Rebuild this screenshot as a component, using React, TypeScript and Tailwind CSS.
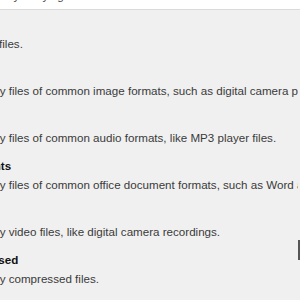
import React from 'react';

const TYPES = [
  { name: 'All Files', desc: 'Show all files.' },
  { name: 'Pictures', desc: 'Show only files of common image formats, such as digital camera photos.' },
  { name: 'Music', desc: 'Show only files of common audio formats, like MP3 player files.' },
  { name: 'Documents', desc: 'Show only files of common office document formats, such as Word and Excel files.' },
  { name: 'Video', desc: 'Show only video files, like digital camera recordings.' },
  { name: 'Compressed', desc: 'Show only compressed files.' },
  { name: 'Emails', desc: 'Show only emails from Thunderbird, Outlook Express and Windows Live Mail.' },
];

export default function App() {
  return (
    <div className="w-[300px] h-[300px] overflow-hidden bg-[#f0f0f0] text-[#3a3a3a] text-[11.6px]"
      style={{ fontFamily: '"Liberation Sans", Arial, sans-serif' }}>
      <div className="h-[10px] bg-white border-b border-[#dadada] overflow-hidden flex items-end">
        <div className="whitespace-nowrap ml-[-96px] mb-[6px] leading-[14px] text-[#444]">
          What sort of files are you trying to recover?
        </div>
      </div>
      <div className="flex">
        <div className="flex-1 overflow-hidden">
          <div className="ml-[-48px] pt-[5px] flex flex-col gap-[9px]">
            {TYPES.map((t) => (
              <div key={t.name} className="whitespace-nowrap">
                <div className="font-bold text-[#111] leading-[19px] ml-[-4px]">{t.name}</div>
                <div className="leading-[19px]">{t.desc}</div>
              </div>
            ))}
          </div>
        </div>
        <div className="w-[2px] shrink-0">
          <div className="mt-[230px] h-[20px] bg-[#555]" />
        </div>
      </div>
    </div>
  );
}
